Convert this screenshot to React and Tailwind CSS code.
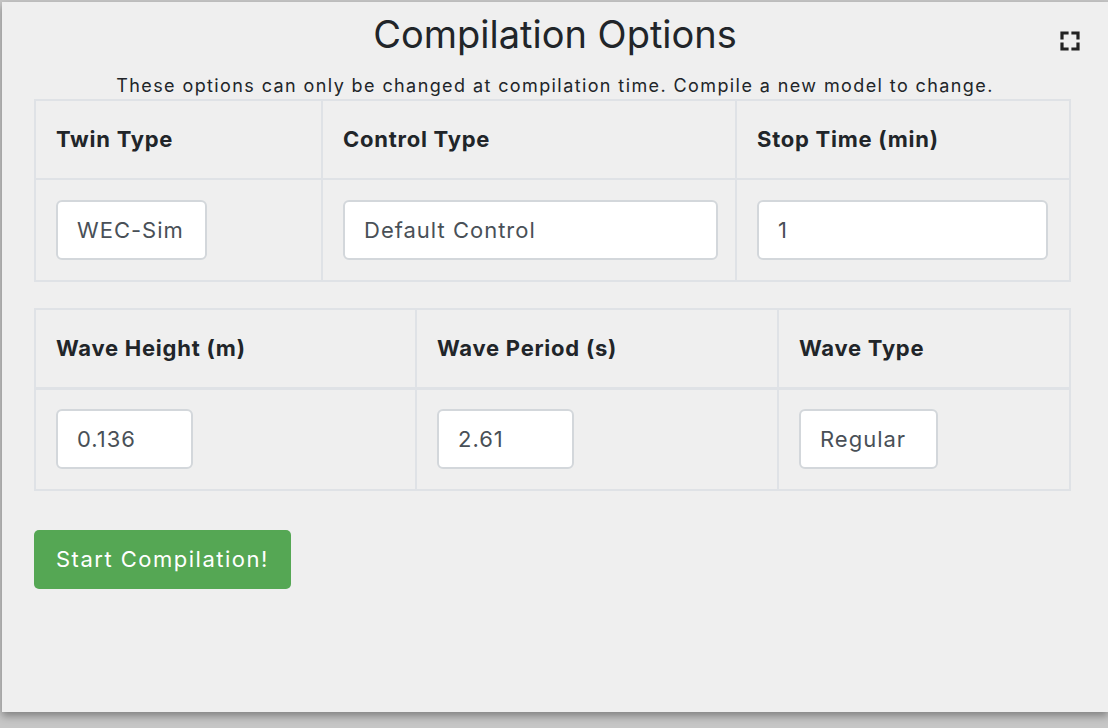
import React from 'react';

const font = { fontFamily: 'Inter, Roboto, "Liberation Sans", sans-serif' };

function Field({ value, width }) {
  return (
    <input
      readOnly
      value={value}
      className={`${width} h-[60px] bg-white border-2 border-[#d3d7db] rounded-[6px] pl-[19px] text-[22px] tracking-[1px] text-[#495057] outline-none`}
    />
  );
}

function OptionTable({ cols, thick, className }) {
  return (
    <table className={`w-[1035px] border-collapse table-fixed ${className}`}>
      <thead>
        <tr className="h-[79px]">
          {cols.map(c => (
            <th
              key={c.label}
              className={`${c.w} border-2 ${thick ? 'border-b-[3px]' : ''} border-[#dfe2e6] text-left pl-[20px] font-bold text-[22px] tracking-[0.75px] text-[#212529]`}
            >
              {c.label}
            </th>
          ))}
        </tr>
      </thead>
      <tbody>
        <tr className="h-[102px]">
          {cols.map(c => (
            <td key={c.label} className="border-2 border-[#dfe2e6] pl-[20px]">
              <Field value={c.value} width={c.iw} />
            </td>
          ))}
        </tr>
      </tbody>
    </table>
  );
}

export default function App() {
  return (
    <div className="w-[1108px] h-[728px] bg-[#c6c6c6] overflow-hidden" style={font}>
      <div className="relative ml-[2px] mt-[2px] w-[1106px] h-[710px] bg-[#efefef] shadow-[0_4px_8px_rgba(0,0,0,0.35)]">
        <button className="absolute right-[28px] top-[29px] text-[#222]">
          <svg width="20" height="20" viewBox="0 0 20 20" fill="none" stroke="currentColor" strokeWidth="3.2">
            <path d="M2 7V2h5M13 2h5v5M18 13v5h-5M7 18H2v-5" strokeLinecap="square" />
          </svg>
        </button>
        <h1 className="text-center text-[38px] text-[#212529] pt-[10px] leading-[44px]">Compilation Options</h1>
        <p className="text-center text-[18px] text-[#212529] tracking-[1.4px] mt-[19px] leading-[22px]">
          These options can only be changed at compilation time. Compile a new model to change.
        </p>
        <div className="pl-[32px] pt-[2px]">
          <OptionTable
            cols={[
              { label: 'Twin Type', value: 'WEC-Sim', w: 'w-[287px]', iw: 'w-[151px]' },
              { label: 'Control Type', value: 'Default Control', w: 'w-[414px]', iw: 'w-[375px]' },
              { label: 'Stop Time (min)', value: '1', w: 'w-[334px]', iw: 'w-[291px]' },
            ]}
          />
          <OptionTable
            thick
            className="mt-[26px]"
            cols={[
              { label: 'Wave Height (m)', value: '0.136', w: 'w-[381px]', iw: 'w-[137px]' },
              { label: 'Wave Period (s)', value: '2.61', w: 'w-[362px]', iw: 'w-[137px]' },
              { label: 'Wave Type', value: 'Regular', w: 'w-[292px]', iw: 'w-[139px]' },
            ]}
          />
          <button className="mt-[39px] px-[22px] h-[59px] bg-[#55a754] rounded-[5px] text-white text-[22px] tracking-[1.5px]">
            Start Compilation!
          </button>
        </div>
      </div>
    </div>
  );
}
